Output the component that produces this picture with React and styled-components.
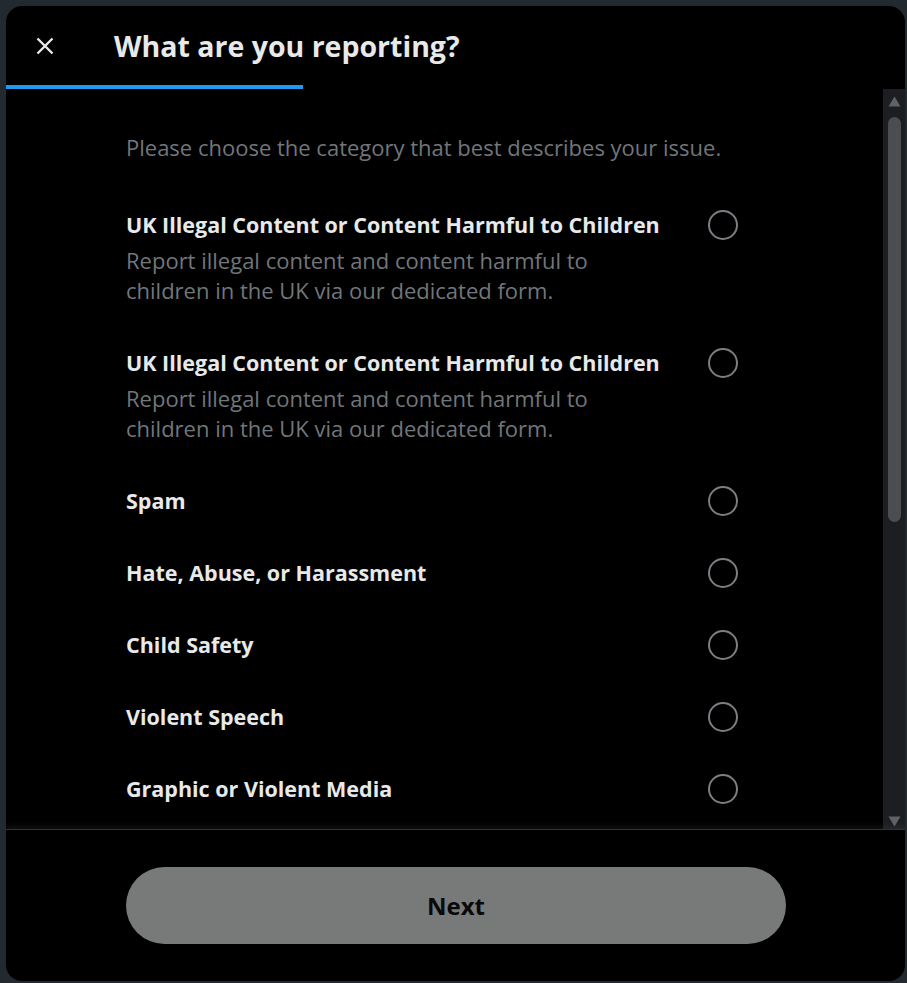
import React from "react";
import styled, { createGlobalStyle } from "styled-components";

const GlobalStyle = createGlobalStyle`
  html, body {
    margin: 0;
    padding: 0;
    background: #22292f;
  }
  body {
    font-family: "Open Sans", "Liberation Sans", sans-serif;
  }
`;

const Page = styled.div`
  padding: 6px 2px 2px 6px;
`;

const Modal = styled.div`
  width: 899px;
  height: 975px;
  background: #000;
  border-radius: 16px;
  overflow: hidden;
  display: flex;
  flex-direction: column;
`;

const Header = styled.div`
  height: 79px;
  display: flex;
  align-items: center;
  padding-left: 21px;
  gap: 51px;
`;

const CloseButton = styled.button`
  width: 36px;
  height: 36px;
  border: none;
  background: transparent;
  padding: 0;
  display: flex;
  align-items: center;
  justify-content: center;
  color: #e7e9ea;
  cursor: pointer;
`;

const Title = styled.h2`
  margin: 0;
  color: #e7e9ea;
  font-size: 28.5px;
  font-weight: 700;
`;

const Progress = styled.div`
  height: 4px;
  flex-shrink: 0;
`;

const ProgressFill = styled.div`
  height: 100%;
  background: #1d9bf0;
`;

const Body = styled.div`
  flex: 1;
  display: flex;
  min-height: 0;
`;

const Scroll = styled.div`
  flex: 1;
  overflow: hidden;
  padding: 46px 145px 0 120px;
`;

const Intro = styled.p`
  margin: 0 0 30px;
  color: #71767b;
  font-size: 22px;
  line-height: 24px;
`;

const Option = styled.label`
  display: flex;
  align-items: ${(p) => (p.$hasDesc ? "flex-start" : "center")};
  justify-content: space-between;
  padding: ${(p) => (p.$hasDesc ? "24px 0 22px" : "24px 0")};
  cursor: pointer;
`;

const OptionText = styled.div`
  display: flex;
  flex-direction: column;
  gap: 8px;
`;

const OptionTitle = styled.span`
  color: #e7e9ea;
  font-size: 21.5px;
  font-weight: 700;
  line-height: 24px;
`;

const OptionDesc = styled.span`
  color: #71767b;
  font-size: 22px;
  line-height: 30px;
  max-width: 510px;
`;

const Radio = styled.span`
  width: 30px;
  height: 30px;
  box-sizing: border-box;
  border: 2px solid #7b7f83;
  border-radius: 50%;
  flex-shrink: 0;
  margin: -3px 0;
`;

const ScrollTrack = styled.div`
  width: 22px;
  background: #1c1e21;
  display: flex;
  flex-direction: column;
  align-items: center;
  padding: 7px 0 2px;
  box-sizing: border-box;
`;

const Arrow = styled.svg`
  flex-shrink: 0;
  display: block;
`;

const Thumb = styled.div`
  width: 13px;
  height: 405px;
  margin: 10px 0 0 1px;
  background: #4b4d51;
  border-radius: 7px;
`;

const Spacer = styled.div`
  flex: 1;
`;

const Footer = styled.div`
  border-top: 1px solid #2f3336;
  padding: 37px 119px 37px 120px;
  box-shadow: 0 -3px 6px rgba(90, 95, 100, 0.18);
  position: relative;
`;

const NextButton = styled.button`
  width: 100%;
  height: 77px;
  border: none;
  border-radius: 9999px;
  background: #787a7a;
  color: #08090a;
  font-family: "Open Sans", sans-serif;
  font-size: 24px;
  font-weight: 700;
  cursor: default;
`;

const options = [
  {
    title: "UK Illegal Content or Content Harmful to Children",
    desc: "Report illegal content and content harmful to children in the UK via our dedicated form.",
  },
  {
    title: "UK Illegal Content or Content Harmful to Children",
    desc: "Report illegal content and content harmful to children in the UK via our dedicated form.",
  },
  { title: "Spam" },
  { title: "Hate, Abuse, or Harassment" },
  { title: "Child Safety" },
  { title: "Violent Speech" },
  { title: "Graphic or Violent Media" },
];

export default function App() {
  return (
    <>
      <GlobalStyle />
      <Page>
        <Modal>
          <Header>
            <CloseButton aria-label="Close">
              <svg width="24" height="24" viewBox="0 0 24 24">
                <path
                  d="M4.5 4.5l15 15M19.5 4.5l-15 15"
                  stroke="currentColor"
                  strokeWidth="2.4"
                  fill="none"
                />
              </svg>
            </CloseButton>
            <Title>What are you reporting?</Title>
          </Header>
          <Progress>
            <ProgressFill style={{ width: "33%" }} />
          </Progress>
          <Body>
            <Scroll>
              <Intro>Please choose the category that best describes your issue.</Intro>
              {options.map((o, i) => (
                <Option key={i} $hasDesc={!!o.desc}>
                  <OptionText>
                    <OptionTitle>{o.title}</OptionTitle>
                    {o.desc && <OptionDesc>{o.desc}</OptionDesc>}
                  </OptionText>
                  <Radio />
                </Option>
              ))}
            </Scroll>
            <ScrollTrack>
              <Arrow width="13" height="11" viewBox="0 0 13 11">
                <path d="M6.5 0.5L12.5 10.5H0.5Z" fill="#5f6267" />
              </Arrow>
              <Thumb />
              <Spacer />
              <Arrow width="13" height="11" viewBox="0 0 13 11">
                <path d="M0.5 0.5H12.5L6.5 10.5Z" fill="#5f6267" />
              </Arrow>
            </ScrollTrack>
          </Body>
          <Footer>
            <NextButton disabled>Next</NextButton>
          </Footer>
        </Modal>
      </Page>
    </>
  );
}
